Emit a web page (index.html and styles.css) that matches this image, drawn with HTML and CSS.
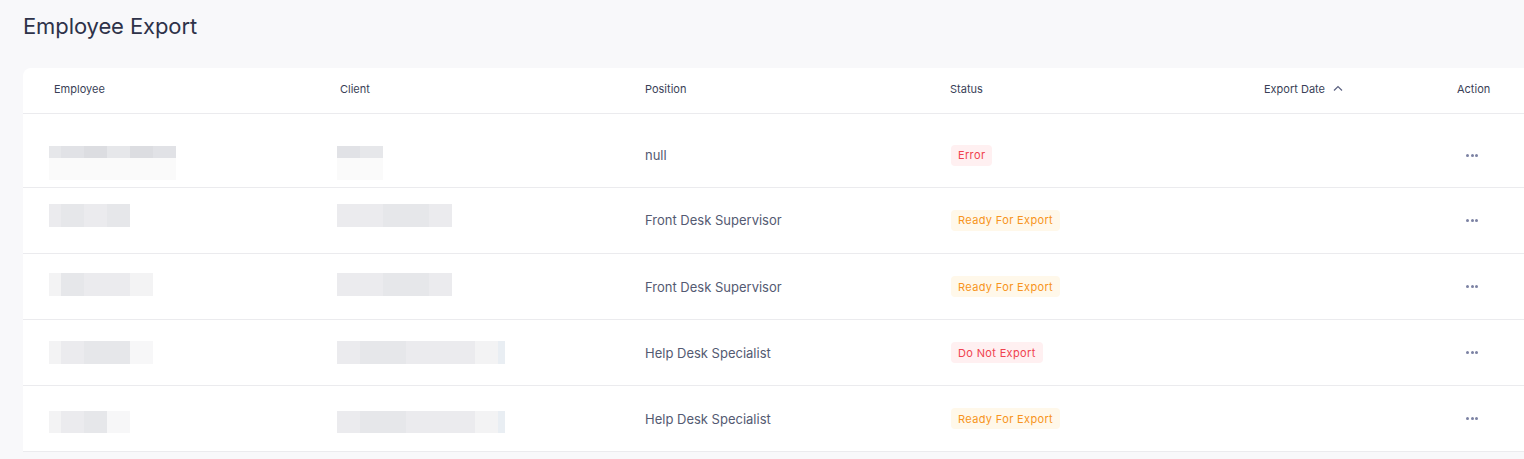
FILE: index.html
```html
<!DOCTYPE html>
<html>
<head>
<meta charset="utf-8">
<link rel="stylesheet" href="styles.css">
</head>
<body>
<div class="page">
  <h1 class="title">Employee Export</h1>
  <div class="card">
    <div class="row head">
      <div class="cell c1">Employee</div>
      <div class="cell c2">Client</div>
      <div class="cell c3">Position</div>
      <div class="cell c4">Status</div>
      <div class="cell c5">Export Date <svg class="sort" width="10" height="6" viewBox="0 0 10 6"><path d="M1 5.5 L5 1.5 L9 5.5" fill="none" stroke="#5b6180" stroke-width="1.2"/></svg></div>
      <div class="cell c6">Action</div>
    </div>

    <div class="row r1">
      <div class="cell c1"><div class="blur stack"><div class="px"><span class="g2 w12"></span><span class="g3 w23"></span><span class="g4 w23"></span><span class="g2 w23"></span><span class="g4 w23"></span><span class="g3 w23"></span></div><div class="px faint"><span class="w127"></span></div></div></div>
      <div class="cell c2"><div class="blur stack"><div class="px"><span class="g3 w23"></span><span class="g2 w23"></span></div><div class="px faint"><span class="w46"></span></div></div></div>
      <div class="cell c3">null</div>
      <div class="cell c4"><span class="badge err">Error</span></div>
      <div class="cell c5"></div>
      <div class="cell c6"><span class="dots"><i></i><i></i><i></i></span></div>
    </div>

    <div class="row r2">
      <div class="cell c1"><div class="blur px tall"><span class="g1 w12"></span><span class="g2 w23"></span><span class="g1 w23"></span><span class="g2 w23"></span></div></div>
      <div class="cell c2"><div class="blur px tall"><span class="g1 w23"></span><span class="g1 w23"></span><span class="g2 w46"></span><span class="g1 w23"></span></div></div>
      <div class="cell c3">Front Desk Supervisor</div>
      <div class="cell c4"><span class="badge ready">Ready For Export</span></div>
      <div class="cell c5"></div>
      <div class="cell c6"><span class="dots"><i></i><i></i><i></i></span></div>
    </div>

    <div class="row r3">
      <div class="cell c1"><div class="blur px tall"><span class="g0 w12"></span><span class="g2 w23"></span><span class="g1 w46"></span><span class="g0 w23"></span></div></div>
      <div class="cell c2"><div class="blur px tall"><span class="g1 w23"></span><span class="g1 w23"></span><span class="g2 w46"></span><span class="g1 w23"></span></div></div>
      <div class="cell c3">Front Desk Supervisor</div>
      <div class="cell c4"><span class="badge ready">Ready For Export</span></div>
      <div class="cell c5"></div>
      <div class="cell c6"><span class="dots"><i></i><i></i><i></i></span></div>
    </div>

    <div class="row r4">
      <div class="cell c1"><div class="blur px tall"><span class="g0 w12"></span><span class="g1 w23"></span><span class="g2 w46"></span><span class="gx w23"></span></div></div>
      <div class="cell c2"><div class="blur px tall"><span class="g1 w23"></span><span class="g2 w23"></span><span class="g2 w23"></span><span class="g1 w23"></span><span class="g1 w23"></span><span class="g1 w23"></span><span class="g0 w23"></span><span class="gb w7"></span></div></div>
      <div class="cell c3">Help Desk Specialist</div>
      <div class="cell c4"><span class="badge err">Do Not Export</span></div>
      <div class="cell c5"></div>
      <div class="cell c6"><span class="dots"><i></i><i></i><i></i></span></div>
    </div>

    <div class="row r5">
      <div class="cell c1"><div class="blur px tall"><span class="g0 w12"></span><span class="g1 w23"></span><span class="g2 w23"></span><span class="gx w23"></span></div></div>
      <div class="cell c2"><div class="blur px tall"><span class="g1 w23"></span><span class="g2 w23"></span><span class="g2 w23"></span><span class="g1 w23"></span><span class="g1 w23"></span><span class="g1 w23"></span><span class="g0 w23"></span><span class="gb w7"></span></div></div>
      <div class="cell c3">Help Desk Specialist</div>
      <div class="cell c4"><span class="badge ready">Ready For Export</span></div>
      <div class="cell c5"></div>
      <div class="cell c6"><span class="dots"><i></i><i></i><i></i></span></div>
    </div>
  </div>
</div>
</body>
</html>
```

FILE: styles.css
```css
html, body {
  margin: 0;
  padding: 0;
  background: #f8f8fa;
  overflow: hidden;
  font-family: Inter, "Noto Sans", sans-serif;
}

.page {
  padding: 12px 0 0 23px;
  width: 1540px;
}

.title {
  margin: 0;
  font-size: 22px;
  font-weight: 400;
  line-height: 28px;
  color: #2e3249;
  letter-spacing: -0.1px;
}

.card {
  margin-top: 28px;
  background: #ffffff;
  border-radius: 8px 0 0 0;
  width: 1520px;
}

.row {
  display: grid;
  grid-template-columns: 317px 305px 305px 314px 193px 1fr;
  border-bottom: 1px solid #ebebee;
  height: 65px;
  align-items: center;
}

.row.head {
  height: 45px;
}

.head .cell {
  font-size: 11px;
  color: #3a3f57;
  font-weight: 400;
  padding-bottom: 4px;
  box-sizing: border-box;
}

.cell {
  font-size: 13px;
  color: #545a72;
  display: flex;
  align-items: center;
  height: 100%;
}

.cell.c1 {
  padding-left: 31px;
}

.c5 .sort {
  margin-left: 8px;
  margin-top: -1px;
}

.row.r1 {
  height: 73px;
}
.r1 .cell {
  padding-top: 9px;
  box-sizing: border-box;
}
.r1 .cell.c1, .r1 .cell.c2 {
  padding-top: 0;
}
.row.r2 .cell.c3, .row.r2 .cell.c4 {
  padding-bottom: 1px;
  box-sizing: border-box;
}

.blur {
  align-self: flex-start;
}
.cell.c1 .blur { margin-left: -5px; }
.cell.c2 .blur { margin-left: -3px; }

.r1 .blur { margin-top: 32px; }
.r2 .blur { margin-top: 16px; }
.r3 .blur { margin-top: 19px; }
.r4 .blur { margin-top: 21px; }
.r5 .blur { margin-top: 25px; }

.stack {
  display: flex;
  flex-direction: column;
}

.px {
  display: flex;
  height: 12px;
}
.px.faint {
  height: 22px;
}
.px.faint span {
  background: #fafafa;
}
.px.tall {
  height: 23px;
}
.r5 .px.tall { height: 22px; }

.px span { display: block; height: 100%; }

.w7 { width: 7px; }
.w12 { width: 12px; }
.w23 { width: 23px; }
.w46 { width: 46px; }
.w127 { width: 127px; }

.g0 { background: #f3f3f4; }
.g1 { background: #ebebee; }
.g2 { background: #e6e7ea; }
.g3 { background: #e1e2e6; }
.g4 { background: #dcdde1; }
.gx { background: #f7f7f8; }
.gb { background: #e9eef3; }

.badge {
  display: inline-flex;
  align-items: center;
  height: 21px;
  padding: 0 7px;
  margin-left: 1px;
  border-radius: 4px;
  font-size: 11px;
  font-weight: 400;
  letter-spacing: 0.35px;
}
.badge.err {
  background: #fff0f1;
  color: #f0434f;
}
.badge.ready {
  background: #fff8ea;
  color: #f79420;
}

.dots {
  display: flex;
  gap: 1.5px;
  margin-left: 9px;
}
.dots i {
  display: block;
  width: 3px;
  height: 3px;
  border-radius: 50%;
  background: #7c82a3;
}
```
